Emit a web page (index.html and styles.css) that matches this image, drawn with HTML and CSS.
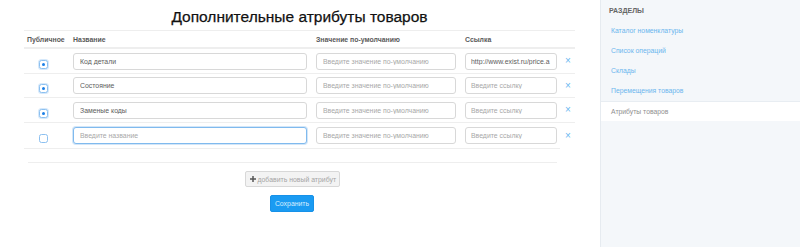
FILE: index.html
```html
<!DOCTYPE html>
<html lang="ru">
<head>
<meta charset="utf-8">
<title>Дополнительные атрибуты товаров</title>
<link rel="stylesheet" href="styles.css">
</head>
<body>
<div class="page">
  <main class="main">
    <h1 class="title">Дополнительные атрибуты товаров</h1>
    <div class="table">
      <div class="head">
        <div class="c-pub">Публичное</div>
        <div class="c-name">Название</div>
        <div class="c-def">Значение по-умолчанию</div>
        <div class="c-link">Ссылка</div>
        <div class="c-x"></div>
      </div>
      <div class="row">
        <div class="c-pub"><input type="checkbox" class="cb" checked></div>
        <div class="c-name"><input class="inp" value="Код детали"></div>
        <div class="c-def"><input class="inp" placeholder="Введите значение по-умолчанию"></div>
        <div class="c-link"><input class="inp" value="http://www.exist.ru/price.a"></div>
        <div class="c-x"><span class="del">×</span></div>
      </div>
      <div class="row short">
        <div class="c-pub"><input type="checkbox" class="cb" checked></div>
        <div class="c-name"><input class="inp" value="Состояние"></div>
        <div class="c-def"><input class="inp" placeholder="Введите значение по-умолчанию"></div>
        <div class="c-link"><input class="inp" placeholder="Введите ссылку"></div>
        <div class="c-x"><span class="del">×</span></div>
      </div>
      <div class="row">
        <div class="c-pub"><input type="checkbox" class="cb" checked></div>
        <div class="c-name"><input class="inp" value="Заменые коды"></div>
        <div class="c-def"><input class="inp" placeholder="Введите значение по-умолчанию"></div>
        <div class="c-link"><input class="inp" placeholder="Введите ссылку"></div>
        <div class="c-x"><span class="del">×</span></div>
      </div>
      <div class="row last">
        <div class="c-pub"><input type="checkbox" class="cb"></div>
        <div class="c-name"><input class="inp focus" placeholder="Введите название"></div>
        <div class="c-def"><input class="inp" placeholder="Введите значение по-умолчанию"></div>
        <div class="c-link"><input class="inp" placeholder="Введите ссылку"></div>
        <div class="c-x"><span class="del">×</span></div>
      </div>
    </div>
    <div class="footer">
      <div class="sep"></div>
      <button class="btn-add"><svg class="plus" viewBox="0 0 8 8" width="6" height="6"><path d="M3 0h2v3h3v2H5v3H3V5H0V3h3z" fill="#555"/></svg>добавить новый атрибут</button>
      <button class="btn-save">Сохранить</button>
    </div>
  </main>
  <aside class="side">
    <div class="side-title">РАЗДЕЛЫ</div>
    <a class="side-link">Каталог номенклатуры</a>
    <a class="side-link">Список операций</a>
    <a class="side-link">Склады</a>
    <a class="side-link">Перемещения товаров</a>
    <a class="side-link active">Атрибуты товаров</a>
  </aside>
</div>
</body>
</html>
```

FILE: styles.css
```css
* { box-sizing: border-box; }
html, body { margin: 0; padding: 0; background: #fff; }
body { font-family: "Liberation Sans", Arial, sans-serif; color: #333; }

.page { display: flex; height: 247px; }

.main { width: 600px; padding: 0 25px 0 24px; }

.title {
  margin: 0;
  height: 30px;
  line-height: 34px;
  font-size: 15.5px;
  font-weight: normal;
  color: #111;
  text-align: center;
  -webkit-text-stroke: 0.25px #111;
}

.table { width: 551px; border-top: 1px solid #eee; }

.head, .row {
  display: grid;
  grid-template-columns: 49px 243px 149px 98px 12px;
  align-items: center;
}

.head {
  height: 18px;
  border-bottom: 2px solid #eee;
  font-size: 6.9px;
  font-weight: bold;
  color: #5a5a5a;
}
.head .c-pub { padding-left: 3px; }

.row { height: 25px; border-bottom: 1px solid #eee; }
.row.short { height: 24px; }
.row.last { border-bottom: none; }
.c-pub { display: flex; justify-content: flex-start; }
.row .c-pub { padding-left: 15px; padding-top: 6px; }

.inp {
  display: block;
  width: 234px;
  height: 17px;
  margin: 0;
  padding: 0 6px;
  border: 1px solid #d8d8d8;
  border-radius: 3px;
  font-family: "Liberation Sans", Arial, sans-serif;
  font-size: 6.9px;
  color: #5c5c5c;
  background: #fff;
  outline: none;
}
.c-def .inp { width: 140px; }
.c-link .inp { width: 92px; padding: 0 5px; }
.inp::placeholder { color: #a8a8a8; }
.inp.focus { border-color: #80baee; box-shadow: 0 0 0 1px #d3e6f8; }

.cb {
  appearance: none;
  -webkit-appearance: none;
  margin: 0;
  width: 9px;
  height: 9px;
  border: 1px solid #8cc0f0;
  border-radius: 2.5px;
  background: #fff;
  position: relative;
}
.cb:checked { box-shadow: 0 0 0 1px #d6e9fb; }
.cb:checked::after {
  content: "";
  position: absolute;
  left: 2px; top: 2px;
  width: 3px; height: 3px;
  border-radius: 50%;
  background: #1b7fe6;
}

.del { color: #6bb8f0; font-size: 10px; line-height: 1; display: block; padding-left: 2px; }

.footer {
  width: 536px;
  border-top: 1px solid #eee;
  display: flex;
  flex-direction: column;
  align-items: center;
}
.sep { width: 529px; margin: 13px 0 0 4px; border-top: 1px solid #eee; align-self: flex-start; }

.btn-add {
  margin-top: 8px;
  height: 16px;
  width: 95px;
  padding: 0 0 0 4px;
  display: flex;
  align-items: center;
  gap: 2px;
  border: 1px solid #d8d8d8;
  border-radius: 2px;
  background: #f3f3f3;
  color: #a5a5a5;
  font-family: "Liberation Sans", Arial, sans-serif;
  font-size: 6.9px;
  white-space: nowrap;
}
.plus { flex: none; }

.btn-save {
  margin-top: 8px;
  height: 17px;
  width: 44px;
  padding: 0;
  border: 1px solid #1791e8;
  border-radius: 2px;
  background: #1a9bf2;
  color: #d8eeff;
  font-family: "Liberation Sans", Arial, sans-serif;
  font-size: 6.9px;
}

.side {
  flex: 1;
  background: #f4f7fa;
  border-left: 1px solid #e6ebf0;
  display: flex;
  flex-direction: column;
  padding-top: 4px;
}
.side-title {
  height: 13px;
  line-height: 13px;
  padding-left: 8px;
  font-size: 7px;
  font-weight: bold;
  color: #666;
  margin-bottom: 4px;
}
.side-link {
  height: 20px;
  line-height: 20px;
  padding-left: 10px;
  font-size: 6.8px;
  color: #6ab6ee;
}
.side-link.active {
  background: #fff;
  color: #8f8f8f;
  border-top: 1px solid #e8edf2;
}
```
